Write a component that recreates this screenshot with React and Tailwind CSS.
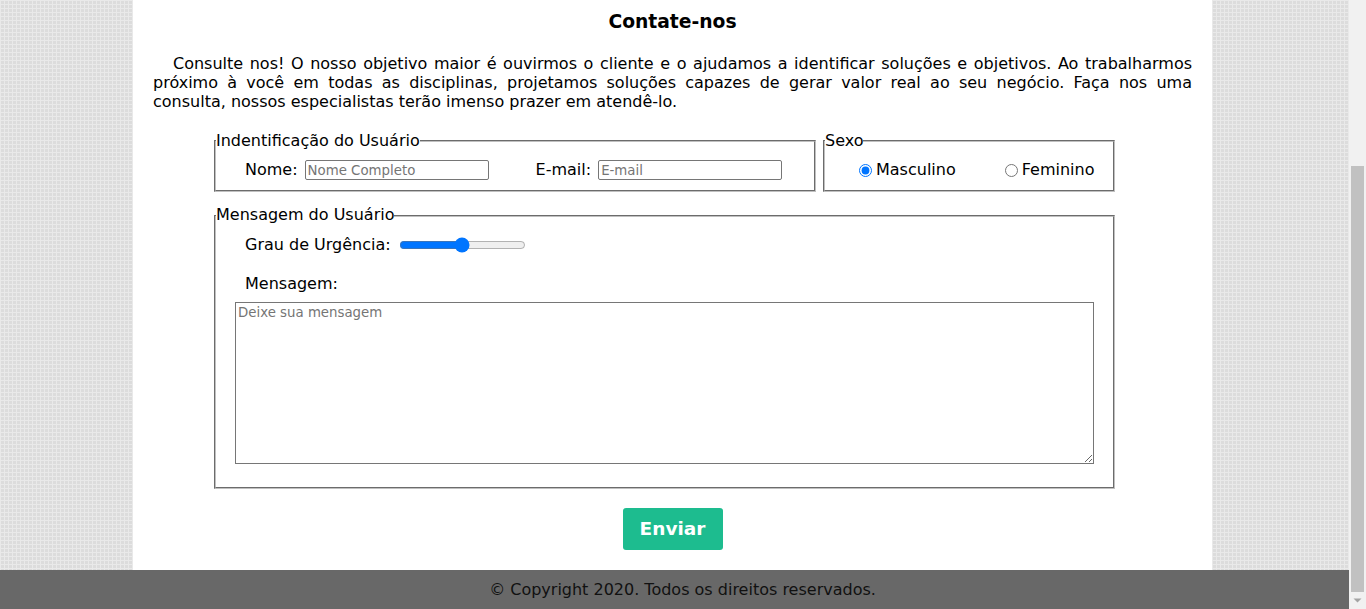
export default function App() {
  return (
    <div className="flex h-[609px] w-[1366px] overflow-hidden font-['DejaVu_Sans',sans-serif] text-black">
      <div className="flex w-[1349px] flex-col">
        <div className="flex-1 bg-[#dcdcdc] bg-[image:linear-gradient(90deg,#e9e9e9_1px,transparent_1px),linear-gradient(#e9e9e9_1px,transparent_1px)] bg-size-[4px_4px]">
          <main className="ml-[133px] h-full w-[1079px] bg-white px-5 pt-[11px]">
            <h3 className="text-center text-[18.72px] font-bold leading-[21.8px]">Contate-nos</h3>
            <p className="mt-[21px] text-justify text-base leading-[19px]">
              <span className="block indent-5 [text-align-last:justify]">
                Consulte nos! O nosso objetivo maior é ouvirmos o cliente e o ajudamos a identificar soluções e
                objetivos. Ao trabalharmos
              </span>
              <span className="block [text-align-last:justify]">
                próximo à você em todas as disciplinas, projetamos soluções capazes de gerar valor real ao seu
                negócio. Faça nos uma
              </span>
              <span className="block">consulta, nossos especialistas terão imenso prazer em atendê-lo.</span>
            </p>
            <form className="mt-[21px]">
              <div className="ml-[61px] flex w-[901px] gap-[7px]">
                <fieldset className="w-[602px] border-2 border-[#c0c0c0] pb-[10px] pt-[10px] [border-style:groove]">
                  <legend className="text-base leading-[18.6px]">Indentificação do Usuário</legend>
                  <div className="flex h-[20px] items-center pl-[29px] text-base">
                    <label>Nome:</label>
                    <input
                      type="text"
                      placeholder="Nome Completo"
                      className="ml-[7px] h-[20px] w-[184px] rounded-[2px] border border-[#767676] px-[2px] text-[13.33px] placeholder:text-[#757575]"
                    />
                    <label className="ml-[47px]">E-mail:</label>
                    <input
                      type="text"
                      placeholder="E-mail"
                      className="ml-[7px] h-[20px] w-[184px] rounded-[2px] border border-[#767676] px-[2px] text-[13.33px] placeholder:text-[#757575]"
                    />
                  </div>
                </fieldset>
                <fieldset className="w-[292px] border-2 border-[#c0c0c0] pb-[10px] pt-[10px] [border-style:groove]">
                  <legend className="text-base leading-[18.6px]">Sexo</legend>
                  <div className="flex h-[20px] items-center pl-[34px] text-base">
                    <input type="radio" name="sexo" defaultChecked className="m-0 h-[13px] w-[13px]" />
                    <label className="ml-[4px]">Masculino</label>
                    <input type="radio" name="sexo" className="m-0 ml-[49px] h-[13px] w-[13px]" />
                    <label className="ml-[4px]">Feminino</label>
                  </div>
                </fieldset>
              </div>
              <fieldset className="ml-[61px] mt-[14px] w-[901px] border-2 border-[#c0c0c0] pb-[23px] pt-[11px] [border-style:groove]">
                <legend className="text-base leading-[18.6px]">Mensagem do Usuário</legend>
                <div className="flex items-center pl-[29px] text-base leading-[18.6px]">
                  <label>Grau de Urgência:</label>
                  <input type="range" className="ml-[8px] w-[127px]" />
                </div>
                <div className="mt-[20px] pl-[29px] text-base leading-[18.6px]">Mensagem:</div>
                <textarea
                  placeholder="Deixe sua mensagem"
                  className="ml-[19px] mt-[9px] block h-[162px] w-[859px] border border-[#767676] bg-white px-[2px] pb-[2px] pt-0 text-[13.33px] placeholder:text-[#757575]"
                />
              </fieldset>
              <div className="mt-[19px] flex justify-center">
                <button
                  type="button"
                  className="h-[42px] w-[100px] rounded-[3px] bg-[#1dbc8f] text-[18.5px] font-bold text-white"
                >
                  Enviar
                </button>
              </div>
            </form>
          </main>
        </div>
        <footer className="flex h-[39px] items-center justify-center bg-[#686868] pl-4 text-base text-[#111]">
          © Copyright 2020. Todos os direitos reservados.
        </footer>
      </div>
      <div className="flex w-[17px] flex-col bg-[#f1f1f1]">
        <div className="ml-[2px] mt-[166px] h-[426px] w-[13px] bg-[#c1c1c1]" />
        <svg width="17" height="17" viewBox="0 0 17 17" className="block">
          <polygon points="4.5,6.5 12.5,6.5 8.5,10.5" fill="#a3a3a3" />
        </svg>
      </div>
    </div>
  );
}
